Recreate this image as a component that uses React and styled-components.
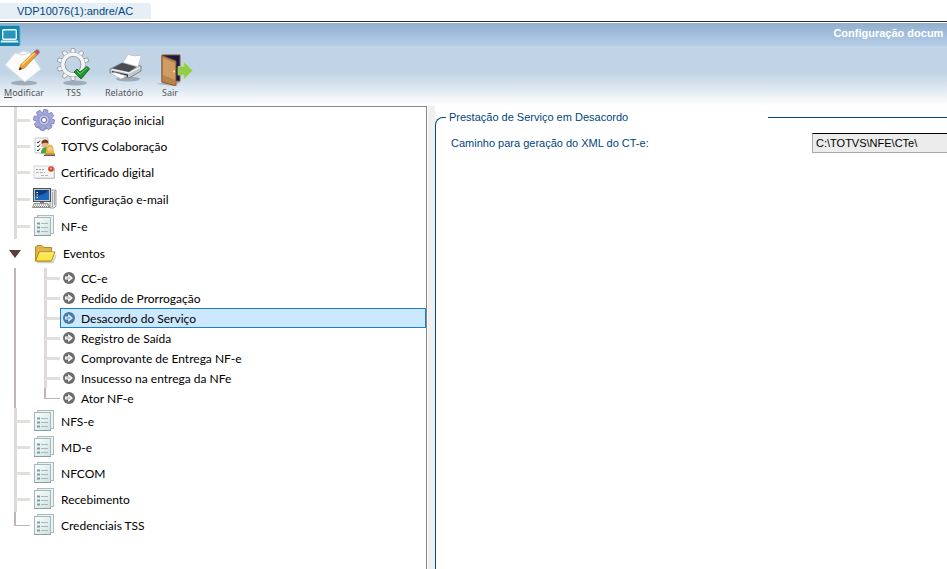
import React, { useState } from "react";
import styled, { createGlobalStyle } from "styled-components";

const GlobalStyle = createGlobalStyle`
  * {
    box-sizing: border-box;
  }
  body {
    margin: 0;
    background: #fff;
    overflow: hidden;
    font-family: "Liberation Sans", Arial, sans-serif;
  }
  svg {
    display: block;
    flex: none;
  }
`;

const ModifyIcon = () => (
  <svg width="40" height="38" viewBox="0 0 40 38">
    <ellipse cx="20" cy="35" rx="13" ry="2.6" fill="#7b8896" opacity="0.6" />
    <path d="M1 17 L11 5 Q15 7 19 3 L26 5 L37 21 L21 34 Z" fill="#fcfcfc" stroke="#d5dade" strokeWidth="0.8" />
    <path d="M13 5 Q18 9 24 5" fill="none" stroke="#d3d7db" />
    <path d="M15 22 L17 16.5 L31 3 L34 6 L20.5 20 Z" fill="#f0a030" stroke="#a8651a" strokeWidth="0.6" />
    <path d="M18 17 L31 4.5" stroke="#ffd977" strokeWidth="1.2" />
    <path d="M30 4 L32.5 1.5 Q35.5 1.5 35.5 4.5 L33.5 7 Z" fill="#c9505a" stroke="#88919a" strokeWidth="0.6" />
    <path d="M15 22 L16 19 L17.8 21 Z" fill="#222" />
  </svg>
);

const GearTssIcon = () => {
  const teeth = [0, 36, 72, 108, 144, 180, 216, 252, 288, 324];
  return (
    <svg width="40" height="38" viewBox="0 0 40 38">
      <ellipse cx="21" cy="35" rx="12" ry="2.6" fill="#7b8896" opacity="0.6" />
      <g stroke="#9a9fa4" strokeWidth="0.9" fill="#f4f5f6">
        {teeth.map((a) => (
          <path key={a} d="M16.6 6 L17.2 0.5 H20.8 L21.4 6" transform={`rotate(${a} 19 16.5)`} />
        ))}
      </g>
      <circle cx="19" cy="16.5" r="10" fill="none" stroke="#8d9297" strokeWidth="4.6" />
      <circle cx="19" cy="16.5" r="10.2" fill="none" stroke="#f4f5f6" strokeWidth="3.4" />
      <path d="M20 24 L23 21 L26 24 L33 18.5 L35.500 21 L27 31 Z" fill="#229433" stroke="#147321" strokeWidth="1" />
      <path d="M23 23 L26 26 L33 20" fill="none" stroke="#6bcf6c" strokeWidth="1" />
    </svg>
  );
};

const PrinterIcon = () => (
  <svg width="40" height="38" viewBox="0 0 40 38">
    <ellipse cx="24" cy="31" rx="12" ry="2.5" fill="#7b8896" opacity="0.6" />
    <path d="M6 21 L18 15 L37 18 L37 23 L25 30 L6 25 Z" fill="#c3c8cd" stroke="#6c7177" strokeWidth="0.8" />
    <path d="M8 20.5 L18 15 L34 18 L25 24 Z" fill="#4a4e53" />
    <path d="M19 14.5 L24 6.5 Q31 9 37.5 7 L34 19 Z" fill="#fff" stroke="#b9bec4" strokeWidth="0.8" />
    <path d="M8 21.5 L25 25 L36 19.5" fill="none" stroke="#fafafa" />
    <path d="M8 23 L24 26.5 V29 L8 25 Z" fill="#33373b" />
    <path d="M6 25 L11 24.5 L23 28 L17 31 Z" fill="#fff" stroke="#a8adb2" strokeWidth="0.6" />
  </svg>
);

const ExitIcon = () => (
  <svg width="46" height="38" viewBox="0 0 46 38">
    <path d="M9 36 L27 38 L34 34 L28 32 Z" fill="#7b8896" opacity="0.5" />
    <path d="M15 7 H33 V33 H28 V37 L15 34 Z" fill="#17194a" stroke="#86552b" strokeWidth="1" />
    <path d="M31 18.5 H37 V14 L45.5 22.5 L37 31 V27 H31 Z" fill="#92ce45" stroke="#aedc74" strokeWidth="0.8" />
    <path d="M15 7.5 L29 13 V38 L15 34 Z" fill="#b9824a" stroke="#8a5a2c" strokeWidth="0.8" />
    <path d="M16 10 L28 15 V32 L16 27 Z" fill="#cf9c63" />
    <circle cx="27" cy="23.5" r="1" fill="#fff0a8" />
  </svg>
);

const WindowIcon = () => (
  <svg width="21" height="21" viewBox="0 0 21 21">
    <rect x="-2" y="0.5" width="22" height="21" rx="1.5" fill="#1287ae" stroke="#6ab3d3" />
    <rect x="2.7" y="4.7" width="13.6" height="9.6" rx="1" fill="#2a93b9" stroke="#e9f8fd" strokeWidth="1.4" />
    <path d="M1 15.5 H18 L18.5 17.5 H0.5 Z" fill="#e3f4fa" />
  </svg>
);

const SettingsIcon = () => {
  const teeth = [0, 45, 90, 135, 180, 225, 270, 315];
  return (
    <svg width="24" height="24" viewBox="0 0 24 24">
      <path d="M4 18 Q12 24 20 17" fill="none" stroke="#55577a" strokeWidth="2" opacity="0.6" />
      <g fill="#a6abdc" stroke="#6b6fa9" strokeWidth="0.7">
        {teeth.map((a) => (
          <path key={a} d="M9 6 L9.8 1.6 H13.8 L14.6 6" transform={`rotate(${a + 12} 12 12)`} />
        ))}
      </g>
      <circle cx="12" cy="12" r="7.8" fill="#a0a5d8" />
      <circle cx="12" cy="12" r="5.2" fill="#c2c6ea" stroke="#8085c0" strokeWidth="0.8" />
      <circle cx="12" cy="12" r="2.6" fill="#fff" stroke="#6266a3" strokeWidth="1" />
    </svg>
  );
};

const PeopleIcon = () => (
  <svg width="24" height="24" viewBox="0 0 24 24">
    <path d="M3 4 H16 V19 H3 Z" fill="#fafafa" stroke="#c3c5c5" />
    <path d="M5 8 L6 9 L8 6.5 M5 12 L6 13 L8 10.5 M5 16 L6 17 L8 14.5" fill="none" stroke="#333" />
    <path d="M9 8 H12 M9 12 H11" stroke="#aaa" />
    <path d="M9 19.5 Q9 13 13.5 13 Q18 13 18 19.5 Z" fill="#4ba545" />
    <circle cx="13" cy="10" r="3.2" fill="#e9b58a" />
    <path d="M9.5 10 Q9.5 5.5 13 5.5 Q16.5 5.5 16.5 9.5 Q13 8 9.5 10 Z" fill="#7a3c1c" />
    <path d="M12.5 21 Q12.5 17 18 17 Q23 17 23 21 Z" fill="#e58a22" />
    <path d="M14 19 Q14 10.5 18 10.5 Q22 10.5 22 19 Z" fill="#ecba3f" />
    <circle cx="18" cy="15" r="2.3" fill="#f3c79e" />
    <path d="M12 21.5 H23" stroke="#2d61a3" />
  </svg>
);

const CertificateIcon = () => (
  <svg width="24" height="24" viewBox="0 0 24 24">
    <rect x="2" y="6" width="20" height="12" fill="#f5f5f6" stroke="#d3d5d8" />
    <path d="M4 9.5 H13" stroke="#b59c8d" strokeDasharray="2 1" />
    <path d="M4 12.5 H13 M9 15.5 H16" stroke="#b5b9be" strokeDasharray="3 1" />
    <path d="M3 18.5 H22.5 V8" fill="none" stroke="#b5b7ba" strokeWidth="0.8" />
    <circle cx="19" cy="9" r="2.8" fill="#d64027" />
    <circle cx="19" cy="8.6" r="1.1" fill="#f6b29a" />
  </svg>
);

const ComputerIcon = () => (
  <svg width="26" height="24" viewBox="0 0 26 24">
    <path d="M18 4 L20 3 H24 V19 L22 21 H18 Z" fill="#e3e5e7" stroke="#85898d" strokeWidth="0.8" />
    <path d="M20.5 5 V20 M22.5 4 V18" stroke="#a3a8ac" />
    <rect x="1.5" y="1.5" width="17" height="13" fill="#c3c7cb" stroke="#4c5156" />
    <rect x="3" y="3" width="14" height="10" fill="#0b3d80" />
    <path d="M3 13 V9 Q11 9 17 3 V13 Z" fill="#1b68bd" />
    <path d="M4.5 5.5 H6 M4.5 8 H6 M4.5 10.5 H6" stroke="#fff" />
    <path d="M8 15 H12 V16 H8 Z" fill="#777" />
    <path d="M2 16.5 H16 L18 20.5 H0.5 Z" fill="#f0f1f2" stroke="#777" strokeWidth="0.8" />
    <path d="M3 18 H16 M2 19.5 H17" stroke="#777" strokeDasharray="1 1" />
  </svg>
);

const ListIcon = () => (
  <svg width="24" height="24" viewBox="0 0 24 24">
    <defs>
      <linearGradient id="sheet" x1="0" y1="0" x2="1" y2="1">
        <stop offset="0" stopColor="#fbfefe" />
        <stop offset="1" stopColor="#cfe1e1" />
      </linearGradient>
    </defs>
    <rect x="5.5" y="1.5" width="16" height="18" fill="#eaf4f4" stroke="#a9bcbc" />
    <rect x="2.5" y="3.5" width="16" height="18" fill="url(#sheet)" stroke="#a3b8b8" />
    <path d="M2 21.5 H19" stroke="#8c9fa0" />
    <path d="M5 9.5 H8 M5 13.5 H8 M5 17.5 H8" stroke="#869b9c" strokeWidth="2" />
    <path d="M9 9.5 H16 M9 13.5 H16 M9 17.5 H16" stroke="#a7babb" />
  </svg>
);

const FolderIcon = () => (
  <svg width="24" height="24" viewBox="0 0 24 24">
    <path d="M4 20.5 H20 L23 13" fill="none" stroke="#b9b9b9" strokeWidth="1.5" opacity="0.7" />
    <path d="M2.5 19 V5 L4 3.5 H9 L10.5 5.5 H18.5 V19 Z" fill="#e0b548" stroke="#b5882a" />
    <path d="M2.5 19 L6 10 H22 L18.5 19 Z" fill="#fbe64c" stroke="#b4850f" />
    <path d="M6.8 11 H20.5" stroke="#fffac0" />
  </svg>
);

const ArrowIcon = ({ active }) => (
  <svg width="12" height="12" viewBox="0 0 12 12">
    <circle cx="6" cy="6" r="6" fill={active ? "#477ba6" : "#6c6c6c"} />
    <path d="M2 4.5 H5.2 V2 L10 6 L5.2 10 V7.5 H2 Z" fill={active ? "#d9ecfb" : "#fff"} />
    <path d="M3.500 6 H7.500" stroke={active ? "#477ba6" : "#8b8b8b"} strokeWidth="0.9" />
  </svg>
);

const CaretIcon = () => (
  <svg width="12" height="8" viewBox="0 0 12 8">
    <path d="M0 0 H12 L6 8 Z" fill="#5c3d3a" />
  </svg>
);

const tools = [
  { label: "Modificar", icon: <ModifyIcon />, width: 48, hotkey: true },
  { label: "TSS", icon: <GearTssIcon />, width: 51 },
  { label: "Relatório", icon: <PrinterIcon />, width: 50 },
  { label: "Sair", icon: <ExitIcon />, width: 42 },
];

const before = [
  { label: "Configuração inicial", icon: <SettingsIcon /> },
  { label: "TOTVS Colaboração", icon: <PeopleIcon /> },
  { label: "Certificado digital", icon: <CertificateIcon /> },
  { label: "Configuração e-mail", icon: <ComputerIcon />, height: 28 },
  { label: "NF-e", icon: <ListIcon /> },
];

const events = [
  "CC-e",
  "Pedido de Prorrogação",
  "Desacordo do Serviço",
  "Registro de Saída",
  "Comprovante de Entrega NF-e",
  "Insucesso na entrega da NFe",
  "Ator NF-e",
];

const after = ["NFS-e", "MD-e", "NFCOM", "Recebimento", "Credenciais TSS"];

const App = () => {
  const [selected, setSelected] = useState("Desacordo do Serviço");
  const [open, setOpen] = useState(true);

  const renderRow = (item, last) => (
    <Row key={item.label} $height={item.height || 26}>
      <Connector $last={last}>
        <span />
        <i />
      </Connector>
      <RowButton onClick={() => setSelected(item.label)}>
        {item.icon}
        {item.label}
      </RowButton>
    </Row>
  );

  return (
    <Screen>
      <GlobalStyle />
      <TabBar>
        <Tab>VDP10076(1):andre/AC</Tab>
      </TabBar>
      <TitleBar>
        <WindowIcon />
        <Title>Configuração docum</Title>
      </TitleBar>
      <Toolbar>
        {tools.map((tool) => (
          <ToolButton key={tool.label} $width={tool.width}>
            {tool.icon}
            <span>
              {tool.hotkey ? <u>{tool.label[0]}</u> : tool.label[0]}
              {tool.label.slice(1)}
            </span>
          </ToolButton>
        ))}
      </Toolbar>
      <Content>
        <Tree>
          {before.map((item) => renderRow(item, false))}
          <li>
            <FolderRow onClick={() => setOpen(!open)}>
              <CaretIcon />
              <FolderIcon />
              Eventos
            </FolderRow>
            {open && (
              <SubTree>
                {events.map((name, i) => (
                  <Row key={name} $height={20}>
                    <Connector $last={i === events.length - 1}>
                      <span />
                      <i />
                    </Connector>
                    <SubButton
                      $active={name === selected}
                      onClick={() => setSelected(name)}
                    >
                      <ArrowIcon active={name === selected} />
                      {name}
                    </SubButton>
                  </Row>
                ))}
              </SubTree>
            )}
          </li>
          {after.map((label, i) =>
            renderRow({ label, icon: <ListIcon /> }, i === after.length - 1)
          )}
        </Tree>
        <Splitter />
        <Panel>
          <Group>
            <legend>Prestação de Serviço em Desacordo</legend>
            <Field>
              <label htmlFor="xmlPath">Caminho para geração do XML do CT-e:</label>
              <PathInput id="xmlPath" type="text" defaultValue="C:\TOTVS\NFE\CTe\" readOnly />
            </Field>
          </Group>
        </Panel>
      </Content>
    </Screen>
  );
};

export default App;

const Screen = styled.div`
  display: flex;
  flex-direction: column;
  height: 100vh;
  overflow: hidden;
`;

const TabBar = styled.div`
  padding-top: 3px;
  height: 22px;
  border-bottom: 1px solid #2b2b30;
`;

const Tab = styled.div`
  width: 151px;
  height: 16px;
  padding-left: 17px;
  border-radius: 0 2px 0 0;
  background: #e6eef6;
  color: #00467f;
  font-size: 11px;
  line-height: 16px;
`;

const TitleBar = styled.header`
  display: flex;
  height: 24px;
  padding-top: 2px;
  border-top: 1px solid #fff;
  background: linear-gradient(#93afcf, #b4cee8);
`;

const Title = styled.h1`
  margin: 0 0 0 auto;
  width: 12%;
  overflow: hidden;
  color: #fff;
  font-size: 11px;
  line-height: 16px;
  white-space: nowrap;
`;

const Toolbar = styled.nav`
  display: flex;
  height: 60px;
  padding-top: 2px;
  background: linear-gradient(#c1d4e5 45%, #fff);
`;

const ToolButton = styled.button`
  display: flex;
  flex-direction: column;
  align-items: center;
  width: ${(props) => props.$width}px;
  padding: 0;
  border: none;
  background: none;
  color: #555;
  font-family: "Noto Sans", sans-serif;
  font-size: 9px;
  line-height: 14px;
`;

const Content = styled.main`
  display: flex;
  flex: 1;
  min-height: 0;
`;

const Tree = styled.ul`
  flex: none;
  width: 427px;
  margin: 0;
  padding: 0;
  border-top: 1px solid #828790;
  border-right: 1px solid #828790;
  list-style: none;
`;

const SubTree = styled.ul`
  margin: 0 0 0 14px;
  padding: 0 0 0 28px;
  border-left: 2px solid #bdb6b3;
  list-style: none;
`;

const Row = styled.li`
  display: flex;
  height: ${(props) => props.$height}px;
  ${Tree} > & {
    padding-left: 14px;
  }
`;

// top half carries the tick, the bottom half goes on to the next row
const Connector = styled.div`
  display: flex;
  flex-direction: column;
  width: 16px;
  span {
    flex: 1;
    border-left: ${(props) => (props.$last ? "2px solid #bdb6b3" : "3px solid #dedad8")};
    border-bottom: ${(props) => (props.$last ? "1px solid #bdb6b3" : "3px solid #e3dfdd")};
  }
  i {
    flex: 1;
    border-left: ${(props) => (props.$last ? "none" : "3px solid #dedad8")};
  }
`;

const RowButton = styled.button`
  display: flex;
  align-items: center;
  gap: 5px;
  padding: 0 0 0 2px;
  border: none;
  background: none;
  color: #000;
  font-family: Lato, "Open Sans", sans-serif;
  font-size: 12px;
  font-variant-ligatures: none;
`;

const FolderRow = styled(RowButton)`
  height: 29px;
  padding-left: 9px;
  gap: 6px;
  svg:first-child {
    margin-right: 6px;
  }
`;

const SubButton = styled(RowButton)`
  flex: 1;
  gap: 6px;
  border: 1px solid ${(props) => (props.$active ? "#1a7fd4" : "transparent")};
  background: ${(props) => (props.$active ? "#cce8ff" : "none")};
`;

const Splitter = styled.div`
  width: 7px;
  margin-left: 1px;
  background: #f0f0f0;
`;

const Panel = styled.section`
  display: flex;
  flex: 1;
  min-width: 0;
  padding-top: 4px;
`;

const Group = styled.fieldset`
  flex: 1;
  min-width: 0;
  margin: 0;
  padding: 9px 0 0 15px;
  border: 1px solid #004b7a;
  border-width: 1px 0 0 1px;
  border-radius: 8px 0 0 0;
  color: #00467f;
  font-size: 11px;
  legend {
    width: 322px;
    margin-left: -5px;
    padding: 0 0 0 3px;
    line-height: 14px;
  }
`;

const Field = styled.div`
  display: grid;
  grid-template-columns: 361px 1fr;
  align-items: center;
`;

const PathInput = styled.input`
  width: 100%;
  min-width: 0;
  height: 20px;
  padding: 0 3px;
  border: 1px solid #a8a8a8;
  border-top-color: #000;
  border-right: none;
  border-radius: 0;
  outline: none;
  background: #ececec;
  color: #000;
  font-family: "Liberation Sans", Arial, sans-serif;
  font-size: 11px;
`;
